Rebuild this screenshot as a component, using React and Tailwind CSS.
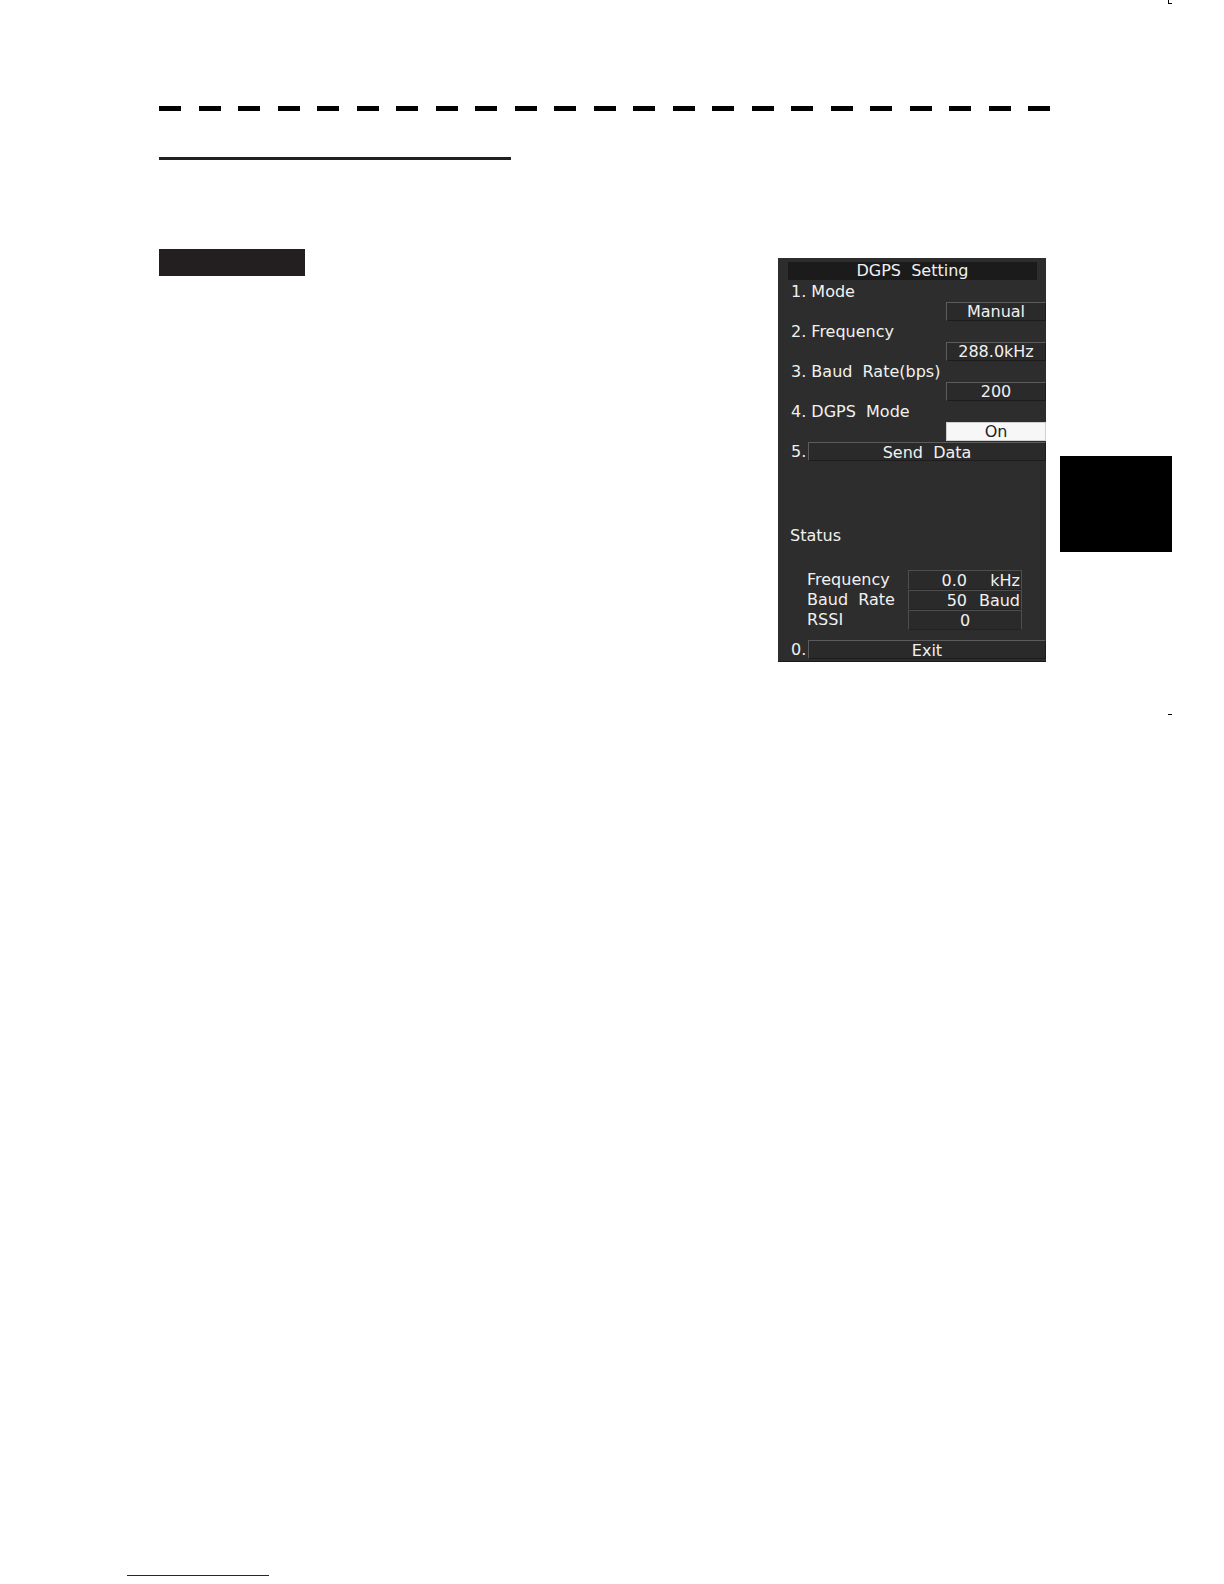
const font = { fontFamily: '"DejaVu Sans", Verdana, sans-serif' };

function Label({ children, className = "" }) {
  return (
    <div className={`h-[20px] leading-[20px] whitespace-pre text-[16px] ${className}`}>
      {children}
    </div>
  );
}

function SettingItem({ label, value, selected }) {
  return (
    <div className="flex flex-col h-[40px]">
      <Label className="pl-[13px]">{label}</Label>
      <div className="flex justify-end">
        <div
          className={`w-[100px] h-[19px] leading-[18px] text-center text-[16px] whitespace-pre border ${
            selected
              ? "bg-[#f7f7f7] text-[#1e1e1e] border-[#d0d0d0]"
              : "bg-[#2a2a2a] border-t-[#5c5c5c] border-l-[#5c5c5c] border-b-[#1c1c1c] border-r-[#1c1c1c]"
          }`}
        >
          {value}
        </div>
      </div>
    </div>
  );
}

function ActionRow({ num, text }) {
  return (
    <div className="flex h-[20px] items-start">
      <div className="w-[30px] pl-[13px] leading-[20px] text-[16px]">{num}</div>
      <div className="flex-1 h-[19px] leading-[19px] text-center text-[16px] whitespace-pre bg-[#2a2a2a] border border-t-[#5c5c5c] border-l-[#5c5c5c] border-b-[#1c1c1c] border-r-[#1c1c1c]">
        {text}
      </div>
    </div>
  );
}

function StatusRow({ label, value, unit, center }) {
  return (
    <div className="flex h-[20px]">
      <div className="w-[130px] pl-[29px] leading-[20px] text-[16px] whitespace-pre">{label}</div>
      <div className="w-[114px] h-[20px] flex leading-[20px] text-[16px] whitespace-pre bg-[#2a2a2a] border border-[#4e4e4e] border-b-[#222]">
        {center ? (
          <div className="flex-1 text-center">{value}</div>
        ) : (
          <>
            <div className="w-[58px] text-right">{value}</div>
            <div className="flex-1 text-right pr-[1px]">{unit}</div>
          </>
        )}
      </div>
    </div>
  );
}

function DgpsPanel() {
  return (
    <div
      className="w-[268px] h-[404px] bg-[#2d2d2d] text-[#f1f1f1] flex flex-col pt-[4px] border-b border-[#1a1a1a]"
      style={font}
    >
      <div className="ml-[10px] mr-[9px] h-[18px] leading-[18px] bg-[#1b1b1b] text-center text-[16px] whitespace-pre">
        DGPS  Setting
      </div>
      <div className="mt-[2px]">
        <SettingItem label="1. Mode" value="Manual" />
        <SettingItem label="2. Frequency" value="288.0kHz" />
        <SettingItem label="3. Baud  Rate(bps)" value="200" />
        <SettingItem label="4. DGPS  Mode" value="On" selected />
        <ActionRow num="5." text="Send  Data" />
      </div>
      <Label className="pl-[12px] mt-[64px]">Status</Label>
      <div className="mt-[24px]">
        <StatusRow label="Frequency" value="0.0" unit="kHz" />
        <StatusRow label="Baud  Rate" value="50" unit="Baud" />
        <StatusRow label="RSSI" value="0" center />
      </div>
      <div className="mt-[10px]">
        <ActionRow num="0." text="Exit" />
      </div>
    </div>
  );
}

export default function App() {
  const dashes = Array.from({ length: 23 });

  return (
    <div className="relative w-[1224px] h-[1584px] bg-white overflow-hidden pl-[159px]">
      {/* crop marks */}
      <div className="absolute left-[1168px] top-0 w-[4px] h-[4px] border-l border-b border-black" />
      <div className="absolute left-[1168px] top-[714px] w-[4px] h-[1px] bg-black" />

      {/* header rules */}
      <div className="flex gap-[17.5px] pt-[106px]">
        {dashes.map((_, i) => (
          <div key={i} className="w-[22px] h-[5px] bg-black" />
        ))}
      </div>
      <div className="mt-[46px] w-[352px] h-[3px] bg-[#231f20]" />

      {/* body */}
      <div className="flex mt-[89px]">
        <div className="w-[146px] h-[27px] bg-[#231f20]" />
        <div className="ml-[473px] mt-[9px]">
          <DgpsPanel />
        </div>
        <div className="ml-[14px] mt-[207px] w-[112px] h-[96px] bg-black" />
      </div>

      {/* footer link line */}
      <div className="absolute left-[127px] top-[1575px] w-[142px] h-[1px] bg-[#1a1a8c]" />
    </div>
  );
}
